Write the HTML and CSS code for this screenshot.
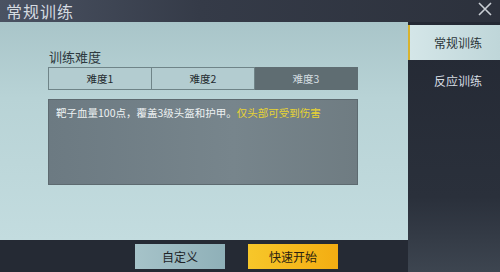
FILE: index.html
```html
<!DOCTYPE html>
<html lang="zh">
<head>
<meta charset="utf-8">
<link rel="stylesheet" href="styles.css">
</head>
<body>
<div class="screen">
  <header class="topbar">
    <span class="title">常规训练</span>
    <svg class="close" width="16" height="16" viewBox="0 0 16 16"><path d="M2 2 L14 14 M14 2 L2 14" stroke="#c9ced4" stroke-width="1.6" fill="none"/></svg>
  </header>
  <div class="body">
    <div class="left">
      <section class="panel">
        <div class="label">训练难度</div>
        <div class="tabs">
          <div class="tab">难度1</div>
          <div class="tab">难度2</div>
          <div class="tab active">难度3</div>
        </div>
        <div class="desc">靶子血量100点，覆盖3级头盔和护甲。<span class="hl">仅头部可受到伤害</span></div>
      </section>
      <footer class="bottombar">
        <div class="btn custom">自定义</div>
        <div class="btn start">快速开始</div>
      </footer>
    </div>
    <nav class="side">
      <div class="stab on">常规训练</div>
      <div class="stab">反应训练</div>
    </nav>
  </div>
</div>
</body>
</html>
```
FILE: styles.css
```css
* { box-sizing: border-box; }
html, body { margin: 0; padding: 0; }
body { width: 500px; height: 272px; overflow: hidden; background: #262b35; font-family: "Noto Sans CJK SC", "Noto Sans", sans-serif; }
.screen { width: 500px; height: 272px; display: flex; flex-direction: column; }
.topbar { height: 22px; background: linear-gradient(90deg, #4a5262 0%, #353b48 40%, #2c313c 100%); display: flex; align-items: flex-start; justify-content: space-between; padding: 1px 7px 0 6px; }
.title { color: #d5dae0; font-size: 16px; line-height: 21px; letter-spacing: 1px; }
.close { margin-top: 0; }
.body { flex: 1; display: flex; }
.left { width: 408px; display: flex; flex-direction: column; }
.panel { height: 218px; background: linear-gradient(180deg, #a9c5c9 0%, #b8d3d6 35%, #c3dcdf 100%); padding: 27px 0 0 48px; }
.label { font-size: 13px; line-height: 16px; color: #2e3a40; margin-left: 1px; }
.tabs { display: flex; width: 310px; height: 23px; margin-top: 2px; }
.tab { flex: 1; display: flex; align-items: center; justify-content: center; font-size: 10.5px; color: #1f2a2e; background: #b3ccd0; border: 1px solid #6f8488; }
.tab + .tab { border-left: none; }
.tab.active { background: #5f6d72; color: #d4dde0; border-color: #5f6d72; }
.desc { width: 310px; height: 86px; margin-top: 9px; background: linear-gradient(90deg, #6c7a82 0%, #77858c 60%, #6f7c82 100%); border: 1px solid #5d6a70; padding: 5px 0 0 7px; font-size: 10.5px; line-height: 16px; color: #eef2f3; }
.hl { color: #e8d432; }
.bottombar { flex: 1; background: #252a34; display: flex; gap: 23px; padding: 4px 0 0 135px; }
.btn { width: 90px; height: 25px; display: flex; align-items: center; justify-content: center; font-size: 12px; color: #1e2428; }
.custom { background: linear-gradient(90deg, #a6c3c9, #8fb0b8); }
.start { background: linear-gradient(90deg, #f7c72a, #f3ad12); color: #2a2210; }
.side { width: 92px; background: linear-gradient(180deg, #242934 0%, #2a303b 70%, #3d4550 100%); padding-top: 3px; }
.stab { height: 40px; display: flex; align-items: center; justify-content: center; padding-left: 8px; font-size: 12px; color: #d6dde2; }
.stab.on { height: 35px; background: linear-gradient(90deg, #d4e6e8, #bfd6d9); color: #2a3438; border-left: 2px solid #d8b32e; padding-left: 6px; }
```
